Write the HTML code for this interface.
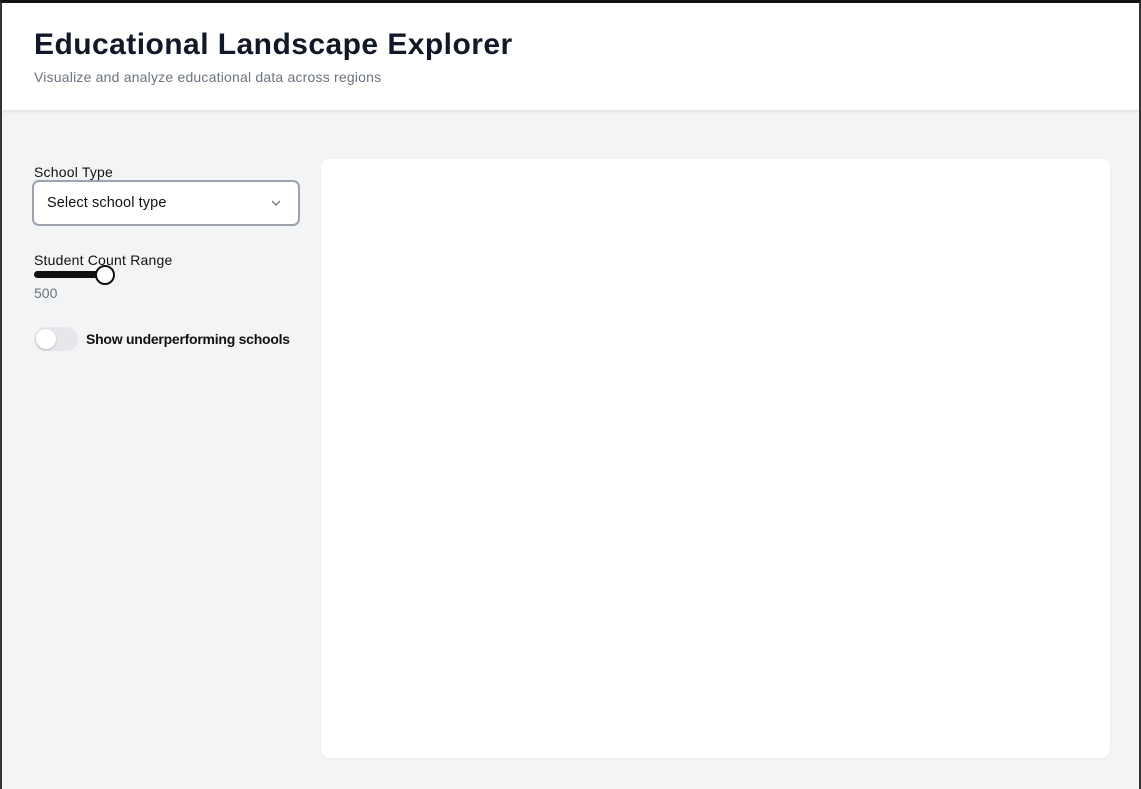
<!DOCTYPE html>
<html><head><style>
*{box-sizing:border-box;margin:0;padding:0}
html,body{width:1141px;height:789px;overflow:hidden;background:#f3f4f6;font-family:"Liberation Sans",sans-serif}
.frame{position:absolute;inset:0;border-top:3px solid #111;border-left:2px solid #333;border-right:2px solid #333}
header{position:absolute;left:2px;right:2px;top:3px;height:108px;background:#fff;border-bottom:1px solid #e5e7eb;box-shadow:0 1px 3px rgba(0,0,0,.08)}
h1{position:absolute;left:32px;top:25px;font-size:30px;font-weight:700;color:#111827;letter-spacing:0.45px}
.sub{position:absolute;left:32px;top:66px;font-size:14px;color:#6b7280;letter-spacing:0.2px}
.lbl{position:absolute;left:34px;font-size:14px;color:#111;letter-spacing:0.2px}
.sel{position:absolute;left:32px;top:180px;width:268px;height:46px;border:2px solid #9ca3af;border-radius:7px;background:#fff;box-shadow:inset 0 0 0 1px #fff}
.sel span{position:absolute;left:13px;top:13px;font-size:14.5px;color:#111;letter-spacing:0.1px}
.track{position:absolute;left:34px;top:271px;width:72px;height:7px;background:#111;border-radius:4px}
.thumb{position:absolute;left:95px;top:265px;width:20px;height:20px;border:2px solid #111;border-radius:50%;background:#fff}
.val{position:absolute;left:34px;top:285px;font-size:14px;color:#6b7280}
.tog{position:absolute;left:34px;top:327px;width:44px;height:24px;border-radius:12px;background:#e5e7eb}
.tog i{position:absolute;left:2px;top:2px;width:20px;height:20px;border-radius:50%;background:#fff;box-shadow:0 1px 2px rgba(0,0,0,.2)}
.tl{position:absolute;left:86px;top:331px;font-size:14px;font-weight:700;color:#111;letter-spacing:-0.25px}
.card{position:absolute;left:321px;top:159px;width:789px;height:599px;background:#fff;border-radius:8px;box-shadow:0 1px 2px rgba(0,0,0,.05)}
</style></head><body>
<header><h1>Educational Landscape Explorer</h1><div class="sub">Visualize and analyze educational data across regions</div></header>
<div class="lbl" style="top:164px">School Type</div>
<div class="sel"><span>Select school type</span>
<svg style="position:absolute;right:16px;top:16px" width="12" height="10" viewBox="0 0 12 10"><path d="M2 3l4 4 4-4" fill="none" stroke="#6b7280" stroke-width="1.3"/></svg></div>
<div class="lbl" style="top:252px">Student Count Range</div>
<div class="track"></div><div class="thumb"></div>
<div class="val">500</div>
<div class="tog"><i></i></div><div class="tl">Show underperforming schools</div>
<div class="card"></div>
<div class="frame"></div>
</body></html>
